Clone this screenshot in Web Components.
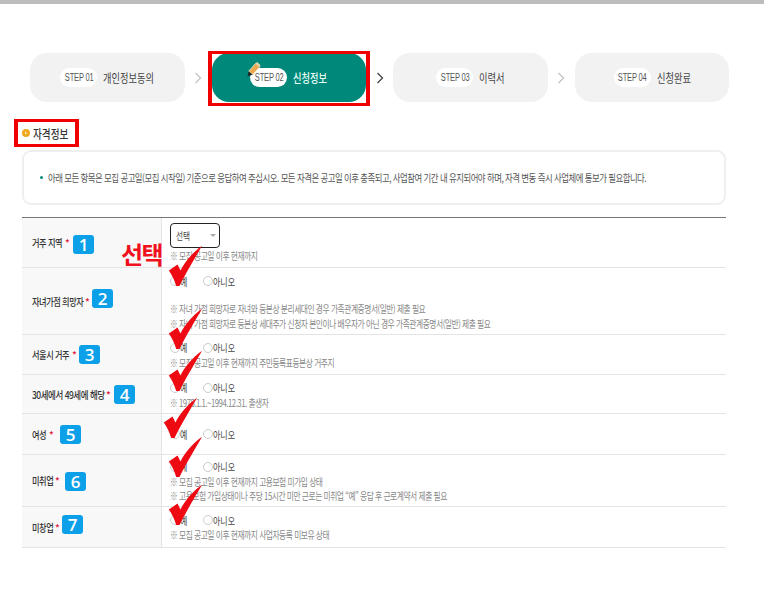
<!DOCTYPE html>
<html lang="ko">
<head>
<meta charset="utf-8">
<title>신청정보</title>
<style>
  html, body { margin: 0; background: #fff; }
  body { font-family: "Noto Sans CJK KR", "Noto Sans", sans-serif; color: #333; }
</style>
</head>
<body>
<apply-page>
  <step-nav>
    <step-item num="01" w="51">개인정보동의</step-item>
    <step-arrow></step-arrow>
    <step-item num="02" w="34" current>신청정보</step-item>
    <step-arrow dark></step-arrow>
    <step-item num="03" w="25">이력서</step-item>
    <step-arrow></step-arrow>
    <step-item num="04" w="33">신청완료</step-item>
  </step-nav>
  <section-title>자격정보</section-title>
  <notice-box>아래 모든 항목은 모집 공고일(모집 시작일) 기준으로 응답하여 주십시오. 모든 자격은 공고일 이후 충족되고, 사업참여 기간 내 유지되어야 하며, 자격 변동 즉시 사업체에 통보가 필요합니다.</notice-box>
  <form-table>
    <form-row label="거주 지역" w="31" badge="1" gap="4" lift="2" h="50" pad="5">
      <select-box></select-box>
      <row-note style="margin-top:1px">※ 모집 공고일 이후 현재까지</row-note>
      <select-callout></select-callout>
    </form-row>
    <form-row label="자녀가점 희망자" w="51" badge="2" gap="3" lift="-3" h="67" pad="5" check="-23">
      <yes-no></yes-no>
      <row-note style="margin-top:12px;line-height:15px">※ 자녀 가점 희망자로 자녀와 등본상 분리세대인 경우 가족관계증명서(일반) 제출 필요</row-note>
      <row-note style="line-height:15px">※ 자녀 가점 희망자로 등본상 세대주가 신청자 본인이나 배우자가 아닌 경우 가족관계증명서(일반) 제출 필요</row-note>
    </form-row>
    <form-row label="서울시 거주" w="38" badge="3" gap="3" lift="0" h="40" pad="4.5" check="-27">
      <yes-no></yes-no>
      <row-note>※ 모집 공고일 이후 현재까지 주민등록표등본상 거주지</row-note>
    </form-row>
    <form-row label="30세에서 49세에 해당" w="72" sx=".81" badge="4" gap="4" lift="0" h="39" pad="4.5" check="-25">
      <yes-no></yes-no>
      <row-note>※ 1975.1.1.~1994.12.31. 출생자</row-note>
    </form-row>
    <form-row label="여성" w="15" badge="5" gap="7" lift="0" h="41" pad="12" check="-17" nudge="-5">
      <yes-no></yes-no>
    </form-row>
    <form-row label="미취업" w="21" badge="6" gap="6" lift="1" h="52" pad="3.5" check="-19">
      <yes-no></yes-no>
      <row-note style="line-height:14.500px">※ 모집 공고일 이후 현재까지 고용보험 미가입 상태</row-note>
      <row-note style="line-height:14.500px">※ 고용보험 가입상태이나 주당 15시간 미만 근로는 미취업 “예” 응답 후 근로계약서 제출 필요</row-note>
    </form-row>
    <form-row label="미창업" w="21" badge="7" gap="3" lift="-3" h="41" pad="5" check="-23">
      <yes-no></yes-no>
      <row-note>※ 모집 공고일 이후 현재까지 사업자등록 미보유 상태</row-note>
    </form-row>
  </form-table>
</apply-page>

<script>
// small helper, every element gets an open shadow root with its own styles
function makeEl(name, html) {
  customElements.define(name, class extends HTMLElement {
    constructor() {
      super();
      this.attachShadow({ mode: 'open' });
    }
    connectedCallback() {
      this.shadowRoot.innerHTML = typeof html === 'function' ? html(this) : html;
    }
  });
}

// the shot is squeezed sideways, so the hangul gets narrowed instead of spaced
const SQ = x => `.sq { display: inline-block; white-space: nowrap; transform: scaleX(${x}); transform-origin: 0 50%; }`;

makeEl('apply-page', `
  <style>
    :host { display: block; width: 764px; height: 596px; border-top: 4px solid #bcbcbc; box-sizing: border-box; overflow: hidden; }
  </style>
  <slot></slot>
`);

makeEl('step-nav', `
  <style>
    :host { display: flex; padding: 49px 0 0 30px; }
  </style>
  <slot></slot>
`);

const PENCIL = `
  <svg class="pencil" width="14" height="16" viewBox="0 0 16 18">
    <path d="M2 11.500 10 2.500 14.500 6.500 6.500 15.500Z" fill="#eda950" stroke="#f6e7c8" stroke-width="1"/>
    <path d="M10 2.500 11.500 1 15.500 4.800 14.500 6.500Z" fill="#e9d9b5"/>
    <path d="M2 11.500 6.500 15.500 .6 17.400Z" fill="#222"/>
  </svg>`;

makeEl('step-item', el => {
  const on = el.hasAttribute('current');
  return `
  <style>
    :host { display: flex; align-items: center; justify-content: center; gap: 6px; width: 154.500px; height: 49px; border-radius: 17px; background: ${on ? '#00897a' : '#f2f2f2'}; position: relative; font-size: 12px; font-weight: ${on ? 500 : 400}; color: ${on ? '#e8fff8' : '#444'}; }
    .pill { position: relative; display: flex; align-items: center; justify-content: center; width: 37px; height: 19px; border-radius: 9.500px; background: #fff; flex: none; }
    .num { display: inline-block; font: 10px "Liberation Sans", sans-serif; letter-spacing: -0.2px; color: #555; white-space: nowrap; transform: scaleX(.75); }
    .lab { display: block; width: ${el.getAttribute('w')}px; }
    .pencil { position: absolute; left: -3px; top: -7px; }
    .mark { position: absolute; inset: -2px -4px -4px -4px; border: solid #f00000; border-width: 3.500px 4px; pointer-events: none; }
    ${SQ(.77)}
  </style>
  <span class="pill"><span class="num">STEP ${el.getAttribute('num')}</span>${on ? PENCIL : ''}</span>
  <span class="lab"><span class="sq"><slot></slot></span></span>
  ${on ? '<i class="mark"></i>' : ''}`;
});

makeEl('step-arrow', el => `
  <style>
    :host { display: flex; width: 27px; height: 49px; align-items: center; justify-content: center; }
  </style>
  <svg width="8" height="12" viewBox="0 0 8 12"><path d="M1.500 1 6.500 6 1.500 11" fill="none" stroke="${el.hasAttribute('dark') ? '#444' : '#c4c4c4'}" stroke-width="1.300"/></svg>
`);

makeEl('section-title', `
  <style>
    :host { display: block; width: max-content; margin: 17px 0 0 14px; padding: 0 7px 0 4px; height: 28px; box-sizing: border-box; border: solid #f00000; border-width: 3px 4px; }
    div { display: flex; align-items: center; gap: 3px; height: 22px; font-size: 12px; font-weight: 500; color: #333; }
    svg { flex: none; }
    .lab { display: block; width: 35px; }
    ${SQ(.8)}
  </style>
  <div>
    <svg width="8" height="8" viewBox="0 0 8 8"><circle cx="4" cy="4" r="4" fill="#f0a91f"/><path d="M3 2.300 5.200 4 3 5.700Z" fill="#fbe3b0"/></svg>
    <span class="lab"><span class="sq"><slot></slot></span></span>
  </div>
`);

makeEl('notice-box', `
  <style>
    :host { display: flex; align-items: center; gap: 4px; margin: 3px 0 0 22px; width: 704px; height: 55px; box-sizing: border-box; padding: 0 0 0 16px; border: 2px solid #efefef; border-radius: 9px; font-size: 10px; letter-spacing: -0.6px; color: #555; }
    i { width: 3px; height: 3px; background: #00897a; border-radius: 50%; flex: none; margin-right: 1px; }
    ${SQ(.84)}
  </style>
  <i></i><span class="sq"><slot></slot></span>
`);

makeEl('form-table', `
  <style>
    :host { display: block; margin: 12px 0 0 22px; width: 704px; border-top: 1px solid #777; }
  </style>
  <slot></slot>
`);

// checkmark gets drawn over the row above, it is an annotation on the shot
const CHECK = top => `
  <svg class="check" style="top:${top}px" width="36" height="42" viewBox="0 0 36 42">
    <path d="M.8 25.500 9.500 19.500 12.500 25.500C16 18 24 8 34 .8 29 10 20 24 11.500 41L8.200 41C6.500 35 4 30 .8 25.500Z" fill="#ee0a12"/>
  </svg>`;

makeEl('form-row', el => {
  const a = n => el.getAttribute(n);
  const check = a('check');
  return `
  <style>
    :host { display: grid; grid-template-columns: 140px 1fr; height: ${a('h')}px; box-sizing: border-box; border-bottom: 1px solid #e4e4e4; }
    .th { display: flex; align-items: center; padding-left: 10px; background: #f8f8f8; border-right: 1px solid #e4e4e4; font-size: 10.500px; letter-spacing: -0.6px; font-weight: 500; color: #333; }
    .lab { display: block; width: ${a('w')}px; }
    .star { width: 4px; margin-left: 2px; color: #e0143c; font-size: 10px; letter-spacing: 0; }
    .badge { display: flex; align-items: center; justify-content: center; width: 21px; height: 19px; border-radius: 3px; background: #0ca0e8; color: #fff; font: 600 17px "Open Sans", sans-serif; letter-spacing: 0; margin-left: ${a('gap')}px; transform: translateY(${a('lift')}px); }
    .td { position: relative; padding: ${a('pad')}px 0 0 8px; }
    .check { position: absolute; left: ${6 + (+a('nudge') || 0)}px; pointer-events: none; z-index: 2; }
    ${SQ(a('sx') || .78)}
  </style>
  <div class="th"><span class="lab"><span class="sq">${a('label')}</span></span><span class="star">*</span><span class="badge">${a('badge')}</span></div>
  <div class="td"><slot></slot>${check ? CHECK(+check) : ''}</div>`;
});

makeEl('select-box', `
  <style>
    :host { display: flex; align-items: center; justify-content: space-between; width: 50px; height: 25px; box-sizing: border-box; padding: 0 3.500px 0 4.500px; border: 1.500px solid #222; border-radius: 4px; font-size: 10.500px; color: #444; }
    i { border: 3px solid transparent; border-top: 3.500px solid #aaa; border-bottom: 0; }
    ${SQ(.73)}
  </style>
  <span class="sq">선택</span><i></i>
`);

makeEl('select-callout', `
  <style>
    :host { position: absolute; left: -41px; top: 21px; font-size: 24px; font-weight: 700; color: #f01020; letter-spacing: -1.500px; line-height: 30px; }
  </style>
  선택
`);

makeEl('yes-no', `
  <style>
    :host { display: flex; align-items: center; height: 16px; font-size: 10.500px; color: #444; }
    i { width: 8px; height: 8px; border: 1px solid #ccc; border-radius: 50%; flex: none; background: #fff; }
    .yes { width: 23px; }
    ${SQ(.76)}
  </style>
  <i></i><span class="yes"><span class="sq">예</span></span><i></i><span class="sq">아니오</span>
`);

makeEl('row-note', `
  <style>
    :host { display: block; font-size: 10px; letter-spacing: -0.6px; line-height: 14px; color: #888; }
    ${SQ(.775)}
  </style>
  <span class="sq"><slot></slot></span>
`);
</script>
</body>
</html>
